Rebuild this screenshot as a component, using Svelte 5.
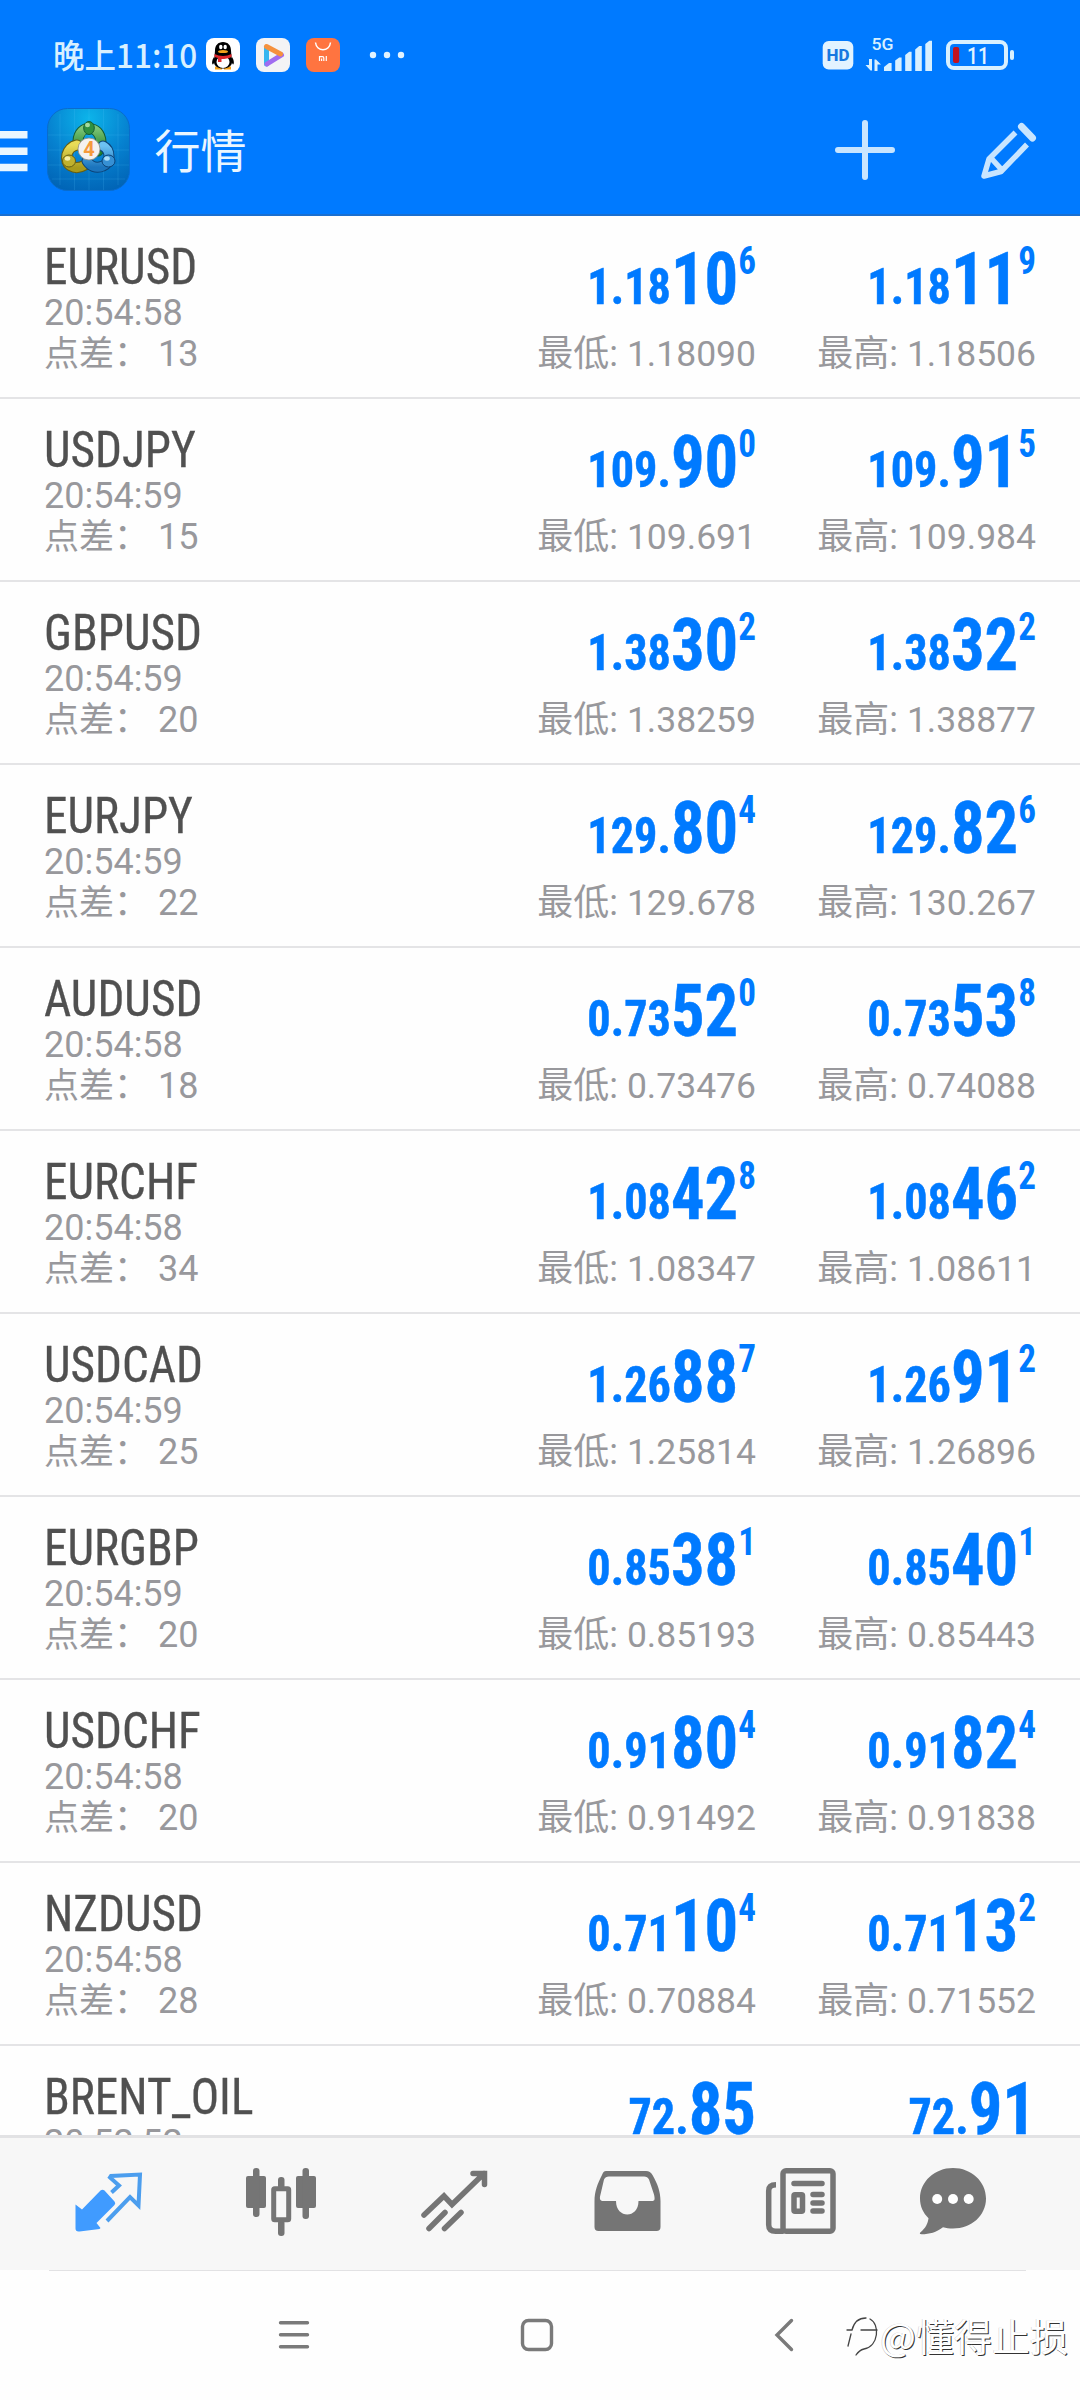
<script>
  const quotes = [
    { s: 'EURUSD', t: '20:54:58', d: '13', bid: ['1.18', '10', '6'], ask: ['1.18', '11', '9'], low: '1.18090', high: '1.18506' },
    { s: 'USDJPY', t: '20:54:59', d: '15', bid: ['109.', '90', '0'], ask: ['109.', '91', '5'], low: '109.691', high: '109.984' },
    { s: 'GBPUSD', t: '20:54:59', d: '20', bid: ['1.38', '30', '2'], ask: ['1.38', '32', '2'], low: '1.38259', high: '1.38877' },
    { s: 'EURJPY', t: '20:54:59', d: '22', bid: ['129.', '80', '4'], ask: ['129.', '82', '6'], low: '129.678', high: '130.267' },
    { s: 'AUDUSD', t: '20:54:58', d: '18', bid: ['0.73', '52', '0'], ask: ['0.73', '53', '8'], low: '0.73476', high: '0.74088' },
    { s: 'EURCHF', t: '20:54:58', d: '34', bid: ['1.08', '42', '8'], ask: ['1.08', '46', '2'], low: '1.08347', high: '1.08611' },
    { s: 'USDCAD', t: '20:54:59', d: '25', bid: ['1.26', '88', '7'], ask: ['1.26', '91', '2'], low: '1.25814', high: '1.26896' },
    { s: 'EURGBP', t: '20:54:59', d: '20', bid: ['0.85', '38', '1'], ask: ['0.85', '40', '1'], low: '0.85193', high: '0.85443' },
    { s: 'USDCHF', t: '20:54:58', d: '20', bid: ['0.91', '80', '4'], ask: ['0.91', '82', '4'], low: '0.91492', high: '0.91838' },
    { s: 'NZDUSD', t: '20:54:58', d: '28', bid: ['0.71', '10', '4'], ask: ['0.71', '13', '2'], low: '0.70884', high: '0.71552' },
    { s: 'BRENT_OIL', t: '20:52:52', d: '', bid: ['72.', '85', ''], ask: ['72.', '91', ''], low: '', high: '' }
  ];
</script>

<div class="screen">
  <header>
    <div class="status">
      <span class="clock">晚上11:10</span>
      <svg class="app-badge" viewBox="0 0 34 34">
        <rect width="34" height="34" rx="8" fill="#fff" />
        <path d="M9 28.500h7v3H9zM18 28.500h7v3h-7z" fill="#f5a21b" />
        <path d="M8 19c-2 3-2.500 7-1 7.500L10 22zM26 19c2 3 2.500 7 1 7.500L24 22z" fill="#000" />
        <path d="M17 4c-5 0-8 3.500-8 8.500L8.500 19 8 24c0 4 4 6.500 9 6.500s9-2.500 9-6.500l-.5-5-.5-6.500C25 7.500 22 4 17 4z" fill="#000" />
        <ellipse cx="17" cy="24" rx="6.500" ry="6" fill="#fff" />
        <ellipse cx="14.800" cy="9" rx="1.700" ry="2.300" fill="#fff" />
        <ellipse cx="19.200" cy="9" rx="1.700" ry="2.300" fill="#fff" />
        <ellipse cx="17" cy="13.500" rx="5" ry="1.600" fill="#f5a21b" />
        <path d="M8.500 16c5 2.500 12 2.500 17 0v3c-3 1.500-6.500 2-10 2v3h-3.500v-4L8.500 19z" fill="#e0262b" />
      </svg>
      <svg class="app-badge" viewBox="0 0 34 34">
        <rect width="34" height="34" rx="8" fill="#f3f3f5" />
        <path d="M10.500 10v16" stroke="#36b6f0" stroke-width="5" stroke-linecap="round" />
        <path d="M11 26l14.500-9" stroke="#a06cf0" stroke-width="5" stroke-linecap="round" />
        <path d="M10.500 8.500L24.500 16" stroke="#f5913e" stroke-width="5" stroke-linecap="round" />
      </svg>
      <svg class="app-badge" viewBox="0 0 34 34">
        <rect width="34" height="34" rx="8" fill="#ff7440" />
        <path d="M9.500 4.500c1 9.500 14 9.500 15 0" fill="none" stroke="#fff" stroke-width="1.500" />
        <path d="M13.500 23v-4.300h3q1.300 0 1.300 1.300V23M15.600 20.500V23M20.300 18v5" fill="none" stroke="#fff" stroke-width="1.200" />
      </svg>
      <svg class="more" viewBox="0 0 36 8" fill="#e2f3ff"><circle cx="4" cy="4" r="3.200" /><circle cx="18" cy="4" r="3.200" /><circle cx="32" cy="4" r="3.200" /></svg>
      <svg class="radio" viewBox="820 36 198 38">
        <rect x="822.700" y="41" width="30.600" height="28.500" rx="6" fill="#e2f3ff" />
        <text x="838" y="61" text-anchor="middle" font-size="16" font-weight="800" fill="#1878e0" textLength="23" lengthAdjust="spacingAndGlyphs">HD</text>
        <text x="882.500" y="50.300" text-anchor="middle" font-size="16.500" font-weight="500" fill="#d8f0ff" textLength="22" lengthAdjust="spacingAndGlyphs">5G</text>
        <g fill="#d8f0ff">
          <path d="M869 59h3v11.500h-1.500l-5-5.500h3.500zM874.500 71V59.500h1.500l5 5h-3.500V71z" />
          <path d="M884 71v-4l5-4h2.600v8zM895.200 71V60.500l4-3h2.400V71zM905.200 71V55l4-3.300h2.400V71zM915.200 71V49.500l4-3.500h2.600v25zM925.300 71V44l4-3.300h2.700V71z" />
          <rect x="1010" y="50" width="4" height="10" rx="2" />
        </g>
        <rect x="948" y="42" width="58" height="26" rx="6" fill="none" stroke="#d8f0ff" stroke-width="4" />
        <rect x="953" y="47" width="6.200" height="16" rx="2" fill="#c1121f" />
        <text x="978" y="63.700" text-anchor="middle" font-size="23" font-weight="500" fill="#e2f3ff" textLength="22" lengthAdjust="spacingAndGlyphs">11</text>
      </svg>
    </div>
    <div class="toolbar">
      <svg class="menu" viewBox="0 0 28 41" fill="#eaf6ff"><path d="M0 0h27.500v7.500H0zM0 16.500h27.500V24H0zM0 32.700h27.500v7.500H0z" /></svg>
      <svg class="logo" viewBox="0 0 83 83">
        <defs>
          <radialGradient id="sky" cx=".5" cy=".12" r=".95"><stop offset="0" stop-color="#0cb4ea" /><stop offset=".55" stop-color="#0680cf" /><stop offset="1" stop-color="#0062b4" /></radialGradient>
          <linearGradient id="gr" x2="0" y2="1"><stop offset="0" stop-color="#7cc576" /><stop offset="1" stop-color="#23822c" /></linearGradient>
          <linearGradient id="ye" x2="0" y2="1"><stop offset="0" stop-color="#e9dc58" /><stop offset="1" stop-color="#a89a1c" /></linearGradient>
          <linearGradient id="bl" x2="0" y2="1"><stop offset="0" stop-color="#6cc1f2" /><stop offset="1" stop-color="#1b74bd" /></linearGradient>
        </defs>
        <rect x=".5" y=".5" width="82" height="82" rx="20" fill="url(#sky)" stroke="#0a6ccc" />
        <path d="M13 6v71M27.500 1v81M42 1v81M56.500 1v81M71 6v71M1 27h81M1 42h81M1 57h81M5 71h73" stroke="#5fc4ff" stroke-opacity=".16" />
        <g fill="none" stroke-linecap="round">
          <path d="M31 33c1-17 22-17 23 1 0 3-1 6-3 9" stroke="#155c33" stroke-width="11" />
          <path d="M31 33c1-17 22-17 23 1 0 3-1 6-3 9" stroke="url(#gr)" stroke-width="9" />
          <path d="M30 37c-11 2-14 17-6 21 5 3 9 2 14-1" stroke="#665e12" stroke-width="11" />
          <path d="M30 37c-11 2-14 17-6 21 5 3 9 2 14-1" stroke="url(#ye)" stroke-width="9" />
          <path d="M56 38c8 4 8 17 0 20-7 3-13 0-16-5" stroke="#0c4378" stroke-width="11" />
          <path d="M56 38c8 4 8 17 0 20-7 3-13 0-16-5" stroke="url(#bl)" stroke-width="9" />
        </g>
        <ellipse cx="42" cy="20" rx="5.300" ry="6.500" fill="#2f9140" stroke="#155c33" />
        <ellipse cx="40.500" cy="17" rx="2.500" ry="2.300" fill="#a5dba0" />
        <ellipse cx="22" cy="53" rx="6.500" ry="6" fill="#c0b12d" stroke="#665e12" />
        <ellipse cx="20.500" cy="50.500" rx="2.800" ry="2.200" fill="#f5efa8" />
        <ellipse cx="61.500" cy="53" rx="6.500" ry="6" fill="#3690d4" stroke="#0c4378" />
        <ellipse cx="60" cy="50.500" rx="2.800" ry="2.200" fill="#aadcf8" />
        <circle cx="42" cy="41" r="11" fill="#f4f2f0" stroke="#8a8a80" stroke-width=".8" />
        <text x="42" y="48" text-anchor="middle" font-size="20" font-weight="700" fill="#f59a3c">4</text>
      </svg>
      <h1>行情</h1>
      <svg class="add" viewBox="0 0 60 60"><path d="M30 3v54M3 30h54" stroke="#c8e5ff" stroke-width="6" stroke-linecap="round" /></svg>
      <svg class="edit" viewBox="981 121 56 57" fill="none" stroke="#c8e5ff" stroke-width="5.500">
        <path d="M1015.500 131.500L989 158l-5 17 17-4.500 26-27M991 157l10.500 11.500" stroke-linejoin="round" />
        <path d="M1021.500 125.500l11 11.500" stroke-width="7" stroke-linecap="round" />
      </svg>
    </div>
  </header>

  <main>
    {#each quotes as q}
      <article>
        <div class="instrument">
          <div class="symbol"><span>{q.s}</span></div>
          <div class="time">{q.t}</div>
          {#if q.d}<div class="spread"><span class="label">点差：</span> {q.d}</div>{/if}
        </div>
        {#each [[q.bid, '最低', q.low], [q.ask, '最高', q.high]] as [p, label, v]}
          <div class="side">
            <div class="price"><span class="small">{p[0]}</span><span class="big">{p[1]}</span><span class="sup">{p[2]}</span></div>
            {#if v}<div class="range">{label}: <span class="value">{v}</span></div>{/if}
          </div>
        {/each}
      </article>
    {/each}
  </main>

  <nav class="tabs">
    <svg viewBox="22 2138 173 132">
      <path d="M75.500 2204.500l6.500 5 18.500-19q2-1.500 4 0l10 11q1.500 1.500 0 3.500l-18 18 4 5-1 1-20 2.500q-4 .5-4-3z" fill="#409bff" />
      <path d="M111.500 2192.500l7.500-7-9-8 1-1.500 29-1.500-1.500 31-8.500-8.500-23 24" fill="none" stroke="#4c9eee" stroke-width="4" />
    </svg>
    <svg viewBox="195 2138 173 132" fill="#757575">
      <rect x="246" y="2176" width="20" height="32" rx="2" /><rect x="253" y="2168" width="6.500" height="49" rx="3" />
      <rect x="296" y="2176" width="20" height="32" rx="2" /><rect x="302.500" y="2168" width="6.500" height="51" rx="3" />
      <rect x="278" y="2177" width="6.500" height="12" rx="3" /><rect x="278" y="2220" width="6.500" height="16" rx="3" />
      <rect x="273.700" y="2188.700" width="15" height="31" rx="1" fill="#f7f7f7" stroke="#757575" stroke-width="5" />
    </svg>
    <svg viewBox="368 2138 173 132" fill="none" stroke="#757575" stroke-width="5.500" stroke-linecap="round">
      <path d="M424 2215l20-19 8 8.500 32-31M473 2173.500h11.500v11" stroke-linejoin="miter" />
      <path d="M429 2228.500l16-16M444.500 2228.500l16.500-16" />
    </svg>
    <svg viewBox="541 2138 173 132">
      <path d="M606 2171h40c3 0 5 1.500 6.500 4 5 8.500 8 17 8 26v26q0 4-4 4h-58q-4 0-4-4v-26c0-9 3-17.500 7.500-26 1-2.500 2-4 4-4zM609 2176.500c-2.500 0-4 1-5 3l-3.500 15c-1.500 5 0 6.500 3 6.500h12.500c0 18 22.500 18 22.500 0H652c3 0 3-2 2-6.500l-5-15c-1-2-2.500-3-5-3z" fill="#757575" fill-rule="evenodd" />
    </svg>
    <svg viewBox="714 2138 173 132" fill="none" stroke="#757575" stroke-width="5.500">
      <rect x="783" y="2170.700" width="50" height="60.500" rx="3" />
      <path d="M776 2184.700q-7.300 0-7.300 6v34q0 6.500 7 6.500h8" />
      <path d="M794 2183.500h28M813 2194.500h9M813 2203h9M813 2211h9" stroke-linecap="round" />
      <rect x="794" y="2194.700" width="8.500" height="16.500" rx="1" />
    </svg>
    <svg viewBox="887 2138 173 132">
      <path d="M953 2168c18.500 0 33 13.500 33 30.500s-14.500 30-33 30c-4 0-7-.5-10-1.300-7 5-13 7-21.500 7-2 0-2-1-1-2 5-4 7.500-9 8-14-5.500-5.500-8.500-12-8.500-19.700 0-17 14.500-30.500 33-30.500z" fill="#757575" />
      <g fill="#fff"><circle cx="937.200" cy="2199" r="5" /><circle cx="953" cy="2199" r="5" /><circle cx="968.700" cy="2199" r="5" /></g>
    </svg>
  </nav>

  <footer>
    <svg class="keys" viewBox="270 2300 540 70" fill="none" stroke="#7a7a7a" stroke-width="3.400" stroke-linecap="round">
      <path d="M280.500 2322.700h27M280.500 2334.700h27M280.500 2346.700h27" />
      <rect x="522.500" y="2320.500" width="29" height="29" rx="6" />
      <path d="M791.500 2320.500L777 2335l14.500 14.500" />
    </svg>
    <div class="mark">
      <svg viewBox="0 0 34 44" fill="none" stroke-linecap="round">
        <g class="mark-shade"><path d="M1 17h5C8 9 13 5 20 5M15 17h16M5 21L2 33" /><path d="M24 6c10 5 9 27-6 30-4 1-6 3-8 6" /></g>
      </svg>
      <span>@懂得止损</span>
    </div>
  </footer>
</div>

<style>
  :global(body) { background: #fff; }
  .screen { width: 1080px; height: 2400px; display: flex; flex-direction: column; background: #fefefe; font-family: Roboto, 'Noto Sans CJK SC', sans-serif; overflow: hidden; }
  svg { display: block; flex: none; }
  header { height: 216px; box-sizing: border-box; background: #007aff; border-bottom: 2px solid #1a6fd0; flex: none; }
  .status { height: 109px; padding: 0 62px 0 53px; display: flex; align-items: center; }
  .clock { width: 159.400px; margin-right: -6.400px; flex: none; white-space: nowrap; font: 500 33px/40px 'Noto Sans CJK SC', sans-serif; color: #d8f0ff; transform: translateY(-1px) scaleX(.955); transform-origin: left; }
  .app-badge { width: 34px; height: 34px; margin-right: 16px; }
  .more { width: 36px; height: 8px; margin-left: 13px; }
  .radio { width: 198px; height: 38px; margin-left: auto; }
  .toolbar { height: 82px; display: flex; align-items: center; padding-right: 43px; }
  .menu { width: 28px; height: 41px; margin: 2px 18.500px 0 0; }
  .logo { width: 83px; height: 83px; margin-top: -1px; }
  h1 { margin: -4px 0 0 25px; font: 400 46px/60px 'Noto Sans CJK SC', sans-serif; color: #eaf6ff; flex: 1; }
  .add { width: 60px; height: 60px; margin-right: 86px; }
  .edit { width: 56px; height: 57px; }
  main { height: 1919px; overflow: hidden; flex: none; }
  article { height: 183px; box-sizing: border-box; border-bottom: 2px solid #e4e4e6; display: flex; padding: 22px 44px 0 44px; }
  .instrument { flex: 1; color: #98989c; font-size: 36px; line-height: 41px; white-space: nowrap; }
  .symbol { font-size: 50px; line-height: 58px; height: 55px; color: #505050; }
  .symbol span { display: inline-block; font-family: 'Roboto Condensed', Roboto; font-stretch: 75%; transform: scaleX(.945); transform-origin: left; -webkit-text-stroke: .3px #505050; }
  .time { height: 41px; }
  .side { width: 280px; text-align: right; white-space: nowrap; color: #98989c; font-size: 36px; line-height: 41px; }
  .label { font-size: 35px; }
  .value { font-size: 35.500px; }
  .price { height: 96px; line-height: 84px; font-family: 'Roboto Condensed', Roboto; font-stretch: 75%; font-weight: 700; color: #007aff; -webkit-text-stroke: .5px #007aff; transform: scaleX(.925); transform-origin: right; }
  .small { font-size: 50px; }
  .big { font-size: 72px; }
  .sup { font-size: 38px; position: relative; top: -30px; -webkit-text-stroke: 0; }
  .tabs { height: 135px; box-sizing: border-box; border-top: 3px solid #e2e2e4; background: #f7f7f7; display: flex; padding: 0 20px 0 22px; flex: none; }
  .tabs svg { width: 173px; height: 132px; }
  footer { flex: 1; margin: 0 11px 0 49px; border-top: 1px solid transparent; border-image: linear-gradient(90deg, #e2e2e4 976px, transparent 976px) 1; display: flex; padding-top: 29px; }
  .keys { width: 540px; height: 70px; margin-left: 221px; }
  .mark { display: flex; align-items: center; height: 70px; margin-left: 36px; white-space: nowrap; color: #fff; font: 400 38px/50px 'Noto Sans CJK SC', sans-serif; text-shadow: 1px 1px 0 #333, -.5px -.5px .5px #ccc; }
  .mark svg { width: 34px; height: 44px; }
  .mark-shade { stroke: #444; stroke-width: 1.300; }
</style>
